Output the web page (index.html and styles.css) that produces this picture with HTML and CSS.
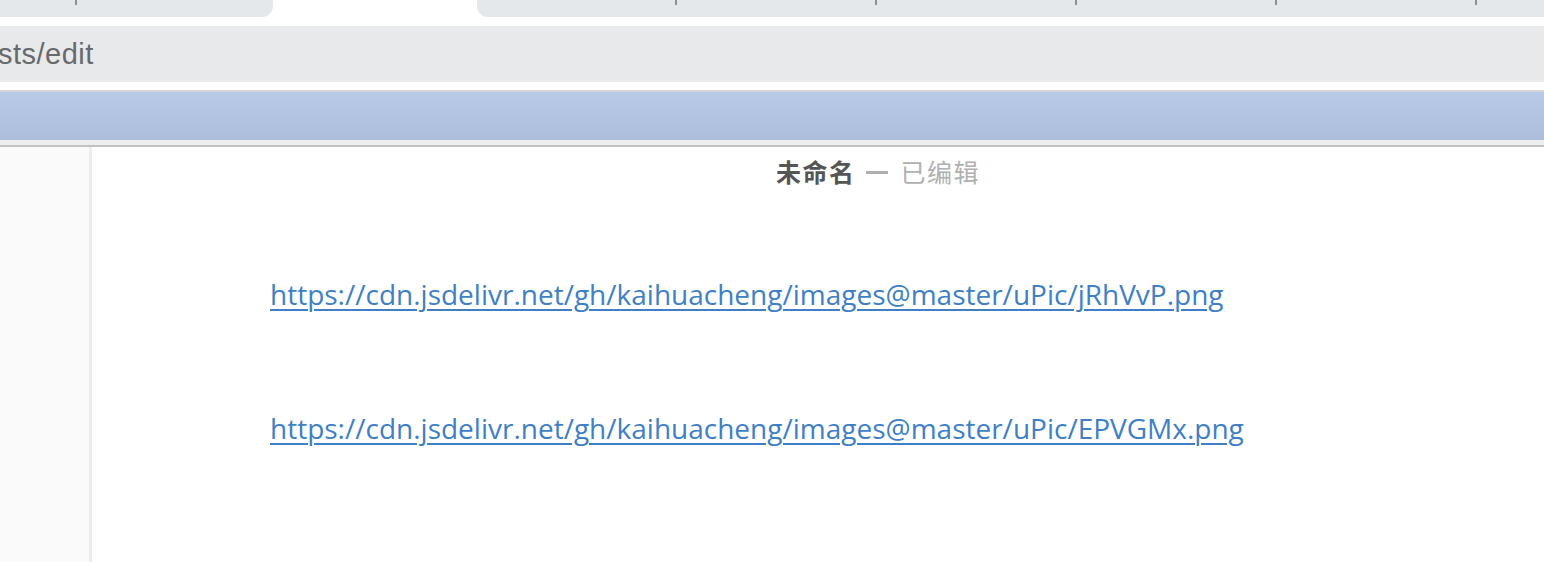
FILE: index.html
```html
<!DOCTYPE html>
<html lang="zh">
<head>
<meta charset="utf-8">
<link rel="stylesheet" href="styles.css">
<title>edit</title>
</head>
<body>
<div class="tabstrip">
  <div class="tab tab-left">
    <span class="sep" style="left:75px"></span>
  </div>
  <div class="tab-active"></div>
  <div class="tab tab-right">
    <span class="sep" style="left:198px"></span>
    <span class="sep" style="left:398px"></span>
    <span class="sep" style="left:598px"></span>
    <span class="sep" style="left:798px"></span>
    <span class="sep" style="left:998px"></span>
  </div>
</div>
<div class="addr-wrap">
  <div class="addr">sts/edit</div>
</div>
<div class="toolbar-line"></div>
<div class="bluebar"></div>
<div class="bluebar-bottom"></div>
<div class="content">
  <aside class="sidebar"></aside>
  <main class="editor">
    <div class="doc-title"><span class="name">未命名</span><span class="dash"></span><span class="state">已编辑</span></div>
    <div class="links">
      <p><a href="#">https://cdn.jsdelivr.net/gh/kaihuacheng/images@master/uPic/jRhVvP.png</a></p>
      <p><a href="#">https://cdn.jsdelivr.net/gh/kaihuacheng/images@master/uPic/EPVGMx.png</a></p>
    </div>
  </main>
</div>
</body>
</html>
```
FILE: styles.css
```css
* { box-sizing: border-box; }
html, body { margin: 0; padding: 0; }
body {
  width: 1544px;
  height: 562px;
  overflow: hidden;
  background: #fff;
  font-family: "Liberation Sans", Arial, sans-serif;
}
.tabstrip {
  display: flex;
  height: 17px;
  background: #fff;
}
.tab {
  position: relative;
  background: #e5e8eb;
  height: 17px;
}
.tab-left {
  width: 273px;
  border-bottom-right-radius: 11px;
}
.tab-active {
  width: 204px;
}
.tab-right {
  flex: 1;
  border-bottom-left-radius: 11px;
}
.sep {
  position: absolute;
  top: 0;
  width: 2px;
  height: 5px;
  background: #8e9094;
}
.addr-wrap {
  padding-top: 9px;
  height: 65px;
}
.addr {
  height: 56px;
  background: #e8e9eb;
  color: #67696c;
  font-size: 29px;
  line-height: 56px;
  letter-spacing: 0.5px;
  margin-left: -2px;
}
.toolbar-line {
  height: 10px;
  background: #fff;
  border-bottom: 2px solid #d6d6d6;
}
.bluebar {
  height: 48px;
  background: linear-gradient(#b7cae7, #adbedd);
}
.bluebar-bottom {
  height: 7px;
  background: #eeeeee;
  border-bottom: 2px solid #c2c2c2;
}
.content {
  display: flex;
  height: 416px;
}
.sidebar {
  width: 92px;
  background: #fafafa;
  border-right: 3px solid #ececec;
}
.editor {
  flex: 1;
  background: #fff;
}
.doc-title {
  display: flex;
  align-items: center;
  justify-content: center;
  padding-left: 120px;
  margin-top: 9px;
  height: 30px;
  font-family: "Noto Sans CJK SC", sans-serif;
  font-size: 25px;
  line-height: 30px;
}
.doc-title .name {
  color: #555;
  font-weight: 700;
  letter-spacing: 1.5px;
}
.doc-title .dash {
  display: inline-block;
  width: 22px;
  height: 3px;
  background: #b0b0b0;
  margin: 2px 13px 0 10px;
}
.doc-title .state {
  color: #b0b0b0;
  letter-spacing: 1.5px;
}
.links {
  padding-left: 178px;
  padding-top: 89px;
}
.links p {
  margin: 0 0 96px;
  font-family: "Open Sans", sans-serif;
  font-size: 28px;
  line-height: 38px;
}
.links a {
  color: #3f7fc6;
  text-decoration: underline;
  text-decoration-thickness: 2px;
  text-underline-offset: 4px;
}
```
